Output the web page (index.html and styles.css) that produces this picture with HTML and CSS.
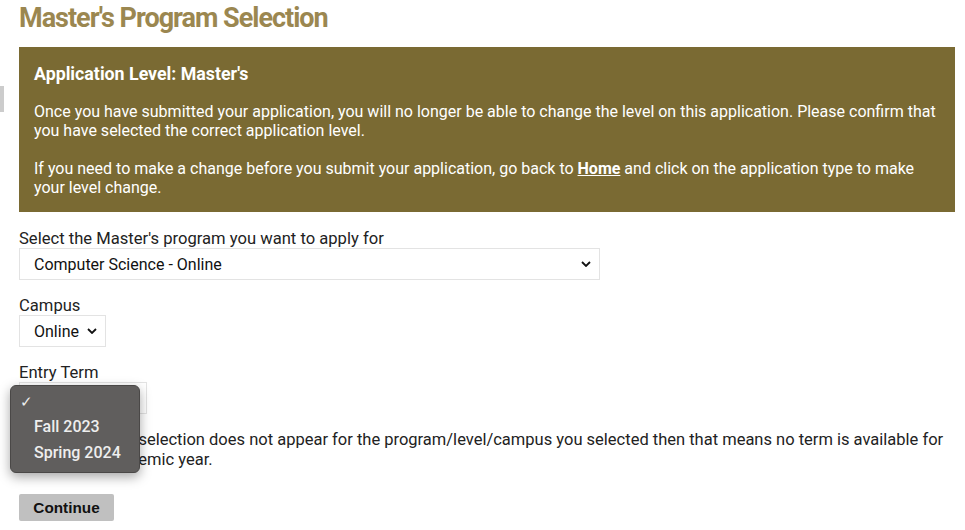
FILE: index.html
```html
<!DOCTYPE html>
<html>
<head>
<meta charset="utf-8">
<link rel="stylesheet" href="styles.css">
</head>
<body>
<div class="side-tab"></div>
<main class="page">
  <h1 class="title">Master's Program Selection</h1>
  <section class="notice">
    <h2 class="notice-title">Application Level: Master's</h2>
    <p class="notice-text">Once you have submitted your application, you will no longer be able to change the level on this application. Please confirm that you have selected the correct application level.</p>
    <p class="notice-text">If you need to make a change before you submit your application, go back to <a class="notice-link" href="#">Home</a> and click on the application type to make your level change.</p>
  </section>

  <div class="field">
    <div class="label">Select the Master's program you want to apply for</div>
    <div class="select select-wide"><span class="select-value">Computer Science - Online</span><svg class="chev" viewBox="0 0 10 6" width="10" height="6"><path d="M1 1 L5 5 L9 1" fill="none" stroke="#111" stroke-width="1.8"/></svg></div>
  </div>

  <div class="field">
    <div class="label">Campus</div>
    <div class="select select-campus"><span class="select-value">Online</span><svg class="chev" viewBox="0 0 10 6" width="10" height="6"><path d="M1 1 L5 5 L9 1" fill="none" stroke="#111" stroke-width="1.8"/></svg></div>
  </div>

  <div class="field">
    <div class="label">Entry Term</div>
    <div class="term-wrap">
      <div class="select select-term"><span class="select-value"></span><svg class="chev" viewBox="0 0 10 6" width="10" height="6"><path d="M1 1 L5 5 L9 1" fill="none" stroke="#111" stroke-width="1.8"/></svg></div>
      <ul class="popup">
        <li class="popup-item"><span class="check">✓</span></li>
        <li class="popup-item">Fall 2023</li>
        <li class="popup-item">Spring 2024</li>
      </ul>
    </div>
  </div>

  <p class="hint">If the dropdown selection does not appear for the program/level/campus you selected then that means no term is available for the current academic year.</p>

  <button class="continue">Continue</button>
</main>
</body>
</html>
```
FILE: styles.css
```css
html, body {
  margin: 0;
  padding: 0;
  background: #fff;
}
body {
  font-family: "Roboto", "Liberation Sans", sans-serif;
  color: #222;
  position: relative;
}
.side-tab {
  position: absolute;
  left: 0;
  top: 86px;
  width: 4px;
  height: 26px;
  background: #cccccc;
}
.page {
  padding: 0 10px 0 19px;
}
.title {
  margin: 0;
  padding-top: 3px;
  font-family: "Roboto", sans-serif;
  font-weight: 700;
  font-size: 27px;
  letter-spacing: -1px;
  line-height: 30px;
  color: #9b8750;
}
.notice {
  margin-top: 14px;
  background: #7a6a33;
  color: #fff;
  padding: 16px 15px 15px 15px;
}
.notice-title {
  margin: 0 0 18px;
  font-size: 17.8px;
  font-weight: 700;
  line-height: 21px;
}
.notice-text {
  margin: 0 0 19px;
  font-size: 16px;
  line-height: 19px;
}
.notice-text:last-child {
  margin-bottom: 0;
}
.notice-link {
  color: #fff;
  font-weight: 700;
}
.notice + .field {
  margin-top: 17px;
}
.label {
  font-size: 16.6px;
  line-height: 19px;
  color: #222;
}
.select {
  display: flex;
  align-items: center;
  justify-content: space-between;
  box-sizing: border-box;
  height: 32px;
  border: 1px solid #e3e3e3;
  background: #fff;
  padding: 0 8px 0 14px;
  font-size: 16px;
  color: #111;
  margin-top: 0;
  margin-bottom: 16px;
}
.select-wide { width: 581px; }
.select-campus { width: 87px; }
.select-term { width: 128px; }
.term-wrap {
  position: relative;
}
.popup {
  position: absolute;
  left: -9px;
  top: 3px;
  width: 130px;
  box-sizing: border-box;
  margin: 0;
  padding: 6px 0 6px;
  list-style: none;
  background: #605e5d;
  border: 1px solid #4a4847;
  border-radius: 6px;
  box-shadow: 0 4px 12px rgba(0,0,0,0.35);
  font-family: "Roboto", "Liberation Sans", sans-serif;
  font-weight: 500;
  font-size: 16px;
  color: #eeeeee;
}
.popup-item {
  height: 26px;
  line-height: 26px;
  padding-left: 23px;
}
.popup-item:first-child {
  height: 22px;
  line-height: 20px;
  padding-left: 9px;
}
.check {
  font-size: 15px;
  font-weight: 400;
}
.hint {
  margin: 1px 0 0;
  font-size: 16.5px;
  line-height: 20px;
  color: #222;
}
.continue {
  display: block;
  margin-top: 24px;
  width: 95px;
  height: 27px;
  border: none;
  border-radius: 2px;
  background: #c0c0c0;
  font-family: "Liberation Sans", sans-serif;
  font-weight: 700;
  font-size: 15.3px;
  color: #111;
  padding: 0;
}
```
